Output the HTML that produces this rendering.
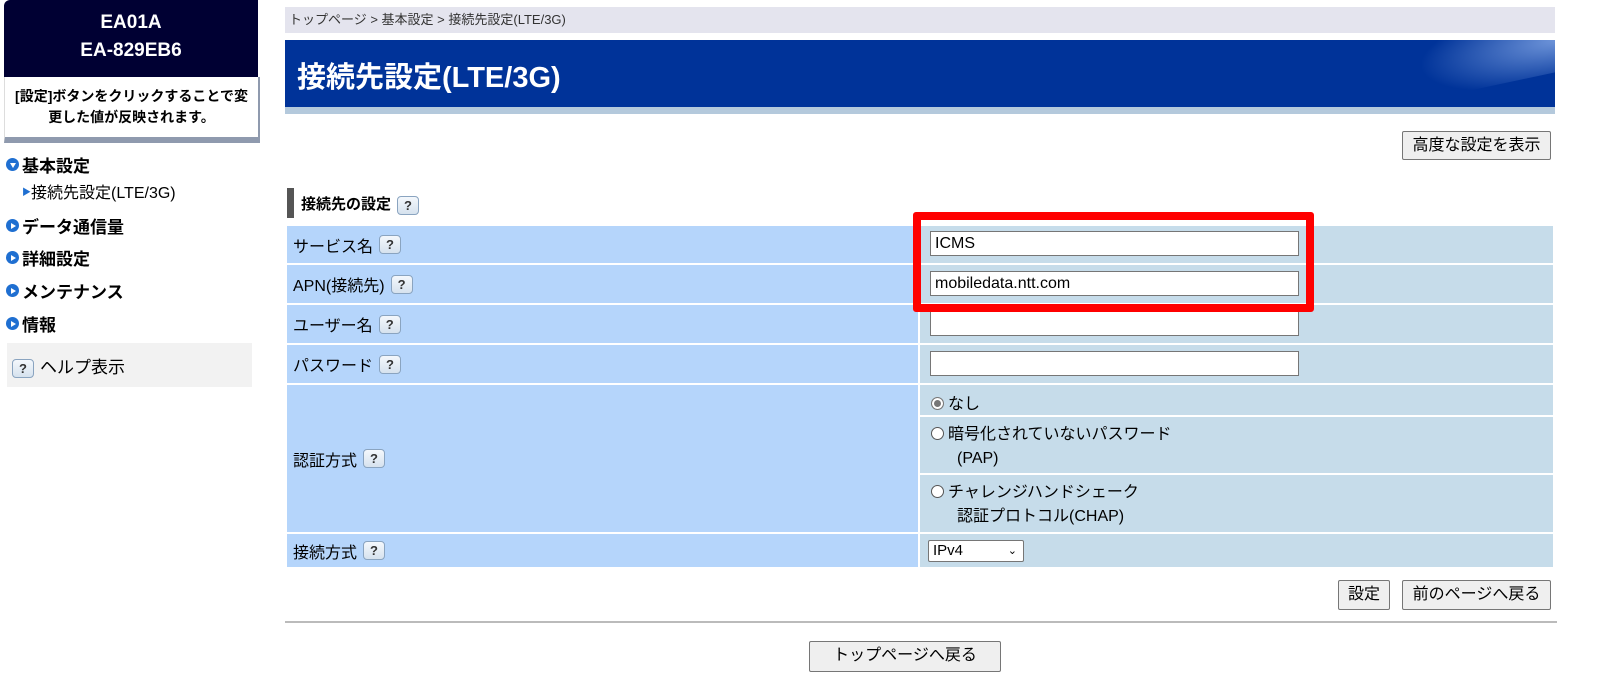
<!DOCTYPE html>
<html><head><meta charset="utf-8"><style>
*{box-sizing:border-box;margin:0;padding:0}
body{width:1607px;height:695px;background:#fff;font-family:"Liberation Sans","Noto Sans CJK JP",sans-serif;font-size:16px;color:#000;position:relative;overflow:hidden}
.a{position:absolute}
.q{display:inline-block;width:22px;height:19px;border:1px solid #8aa4c0;border-radius:4px;background:linear-gradient(#f4f8fc,#d6e2ee);font-size:13px;font-weight:bold;text-align:center;line-height:17px;color:#333;vertical-align:middle;margin-left:6px}
.nav{left:6px;font-weight:bold;font-size:17px;display:flex;align-items:center}
.nav i{display:inline-block;width:13px;height:13px;border-radius:50%;background:#1f6fd1;margin-right:3px;position:relative}
.nav i:after{content:"";position:absolute;left:5px;top:3.5px;border-left:5px solid #fff;border-top:3px solid transparent;border-bottom:3px solid transparent}
.nav i.d:after{left:3.5px;top:5px;border-top:5px solid #fff;border-left:3px solid transparent;border-right:3px solid transparent;border-bottom:0}
.btn{position:absolute;border:1px solid #767676;border-radius:2px;background:#efefef;font-size:16px;text-align:center;line-height:27px}
.lab{position:absolute;left:287px;width:631px;background:#b5d5fb;padding-left:6px;display:flex;align-items:center}
.val{position:absolute;left:920px;width:633px;background:#c6dcea}
.inp{position:absolute;left:930px;width:369px;height:25px;border:1px solid #767676;background:#fff;font-size:16px;padding-left:4px;line-height:23px}
.rad{display:inline-block;width:13px;height:13px;border:1px solid #555;border-radius:50%;background:#fff;vertical-align:-1px;margin-right:4px}
</style></head><body>
<div class="a" style="left:4px;top:0;width:254px;height:77px;background:#000033;border-radius:6px 0 0 0;color:#fff;font-weight:bold;font-size:19px;text-align:center;line-height:28px;padding-top:9px">EA01A<br>EA-829EB6</div>
<div class="a" style="left:4px;top:77px;width:256px;height:66px;background:#fff;border-right:2px solid #8f9aae;border-bottom:6px solid #8f9aae;border-left:1px solid #ddd;font-size:14px;font-weight:bold;text-align:center;line-height:21px;padding-top:9px">[設定]ボタンをクリックすることで変<br>更した値が反映されます。</div>
<div class="a nav" style="top:152px"><i class="d"></i>基本設定</div>
<div class="a" style="left:22px;top:179px;font-size:16px"><span style="color:#1f6fd1;font-size:9px;vertical-align:3px">▶</span>接続先設定(LTE/3G)</div>
<div class="a nav" style="top:213px"><i></i>データ通信量</div>
<div class="a nav" style="top:245px"><i></i>詳細設定</div>
<div class="a nav" style="top:278px"><i></i>メンテナンス</div>
<div class="a nav" style="top:311px"><i></i>情報</div>
<div class="a" style="left:7px;top:343px;width:245px;height:44px;background:#f2f2f2;padding:10px 0 0 0;font-size:17px"><span class="q" style="margin-left:5px;margin-right:6px">?</span>ヘルプ表示</div>

<div class="a" style="left:285px;top:7px;width:1270px;height:26px;background:#e4e4ee;font-size:13px;color:#333;padding:4px 4px;line-height:18px">トップページ &gt; 基本設定 &gt; 接続先設定(LTE/3G)</div>
<div class="a" style="left:285px;top:40px;width:1270px;height:67px;background:#003399;color:#fff;font-weight:bold;font-size:29px;padding:14px 0 0 12px;overflow:hidden">接続先設定(LTE/3G)<div style="position:absolute;left:1120px;top:-40px;width:220px;height:80px;background:radial-gradient(ellipse at 70% 60%,rgba(140,175,235,.8),rgba(0,51,153,0) 65%);transform:rotate(-12deg)"></div></div>
<div class="a" style="left:285px;top:107px;width:1270px;height:7px;background:#b4c9dc"></div>
<div class="btn" style="left:1402px;top:131px;width:149px;height:29px">高度な設定を表示</div>
<div class="a" style="left:287px;top:188px;width:7px;height:30px;background:#555"></div>
<div class="a" style="left:301px;top:193px;font-weight:bold;font-size:15px">接続先の設定<span class="q">?</span></div>

<div class="lab" style="top:226px;height:37px">サービス名<span class="q">?</span></div><div class="val" style="top:226px;height:37px"></div>
<div class="lab" style="top:265px;height:38px">APN(接続先)<span class="q">?</span></div><div class="val" style="top:265px;height:38px"></div>
<div class="lab" style="top:305px;height:38px">ユーザー名<span class="q">?</span></div><div class="val" style="top:305px;height:38px"></div>
<div class="lab" style="top:345px;height:38px">パスワード<span class="q">?</span></div><div class="val" style="top:345px;height:38px"></div>
<div class="lab" style="top:385px;height:147px">認証方式<span class="q">?</span></div>
<div class="val" style="top:385px;height:30px;padding:5px 0 0 11px"><span class="rad" style="border-color:#777;box-shadow:inset 0 0 0 2px #fff;background:#777"></span>なし</div>
<div class="val" style="top:417px;height:56px;padding:6px 0 0 11px;line-height:24px"><span class="rad"></span>暗号化されていないパスワード<br><span style="padding-left:26px">(PAP)</span></div>
<div class="val" style="top:475px;height:57px;padding:6px 0 0 11px;line-height:24px"><span class="rad"></span>チャレンジハンドシェーク<br><span style="padding-left:26px">認証プロトコル(CHAP)</span></div>
<div class="lab" style="top:534px;height:33px">接続方式<span class="q">?</span></div><div class="val" style="top:534px;height:33px"></div>
<div class="a" style="left:928px;top:540px;width:96px;height:22px;border:1px solid #767676;background:#fff;border-radius:2px;padding-left:4px;line-height:20px;font-size:15px">IPv4<span style="position:absolute;right:6px;top:0;font-size:11px">⌄</span></div>

<div class="inp" style="top:231px">ICMS</div>
<div class="inp" style="top:271px">mobiledata.ntt.com</div>
<div class="inp" style="top:311px"></div>
<div class="inp" style="top:351px"></div>
<div class="a" style="left:913px;top:212px;width:401px;height:100px;border:8px solid #ff0000;border-radius:3px"></div>

<div class="btn" style="left:1338px;top:580px;width:52px;height:30px">設定</div>
<div class="btn" style="left:1402px;top:580px;width:149px;height:30px">前のページへ戻る</div>
<div class="a" style="left:285px;top:621px;width:1272px;height:2px;background:#bbb"></div>
<div class="btn" style="left:809px;top:641px;width:192px;height:31px">トップページへ戻る</div>
</body></html>
